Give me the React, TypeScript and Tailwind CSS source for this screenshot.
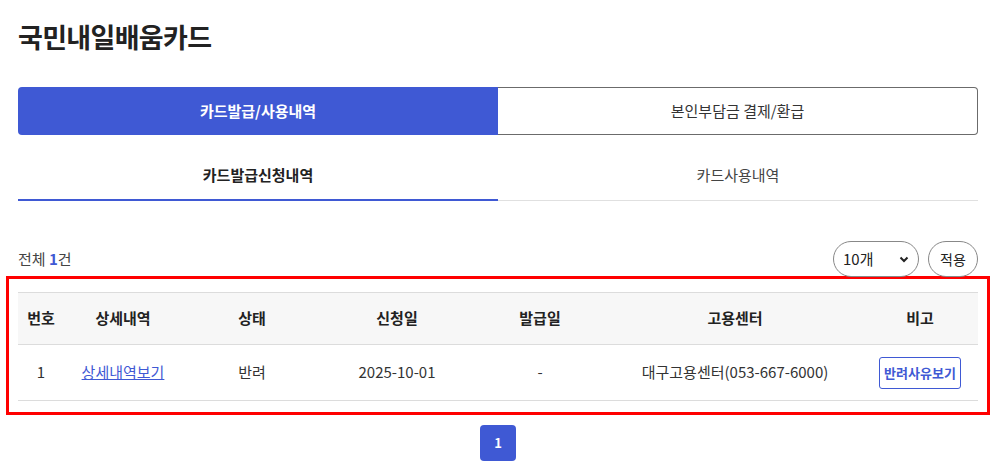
import React from "react";

const font = { fontFamily: '"Noto Sans CJK KR", "Noto Sans", sans-serif' };

const cols = [
  { label: "번호", w: "w-[46px]" },
  { label: "상세내역", w: "w-[118px]" },
  { label: "상태", w: "w-[140px]" },
  { label: "신청일", w: "w-[150px]" },
  { label: "발급일", w: "w-[136px]" },
  { label: "고용센터", w: "w-[254px]" },
  { label: "비고", w: "flex-1" },
];

const App = () => {
  return (
    <div style={font} className="w-[991px] h-[471px] bg-white text-[#222] overflow-hidden">
      <div className="pl-[18px] pr-[13px] pt-[18px]">
        <h1 className="text-[27px] font-bold leading-[38px] tracking-tight">국민내일배움카드</h1>

        <div className="mt-[31px] flex h-[48px] text-[15px]">
          <div className="w-[480px] flex items-center justify-center rounded-l-[4px] bg-[#3f59d4] text-white font-bold">
            카드발급/사용내역
          </div>
          <div className="flex-1 flex items-center justify-center rounded-r-[4px] border border-[#6b6b6b] border-l-0 text-[#333]">
            본인부담금 결제/환급
          </div>
        </div>

        <div className="mt-[16px] flex h-[50px] border-b border-[#e0e0e0] text-[15px]">
          <div className="w-[480px] flex items-center justify-center border-b-2 border-[#3f59d4] -mb-px font-bold">
            카드발급신청내역
          </div>
          <div className="flex-1 flex items-center justify-center text-[#444]">카드사용내역</div>
        </div>

        <div className="mt-[40px] flex items-center justify-between h-[36px]">
          <span className="text-[15px] text-[#444]">
            전체 <span className="text-[#3f59d4] font-bold">1</span>건
          </span>
          <div className="flex items-center gap-[9px]">
            <div className="w-[86px] h-[36px] rounded-full border border-[#888] flex items-center justify-between pl-[9px] pr-[8px] text-[15px]">
              <span>10개</span>
              <svg width="12" height="12" viewBox="0 0 12 12" fill="none" stroke="#222" strokeWidth="2">
                <path d="M2.5 4.5 L6 8 L9.5 4.5" />
              </svg>
            </div>
            <div className="w-[50px] h-[36px] rounded-full border border-[#888] flex items-center justify-center text-[14px]">
              적용
            </div>
          </div>
        </div>

        <div className="-mx-[12px] -mt-px border-[3px] border-[#ff0000] px-[9px] pt-[13px] pb-[11px]">
          <div className="border-t border-[#dcdcdc] text-[15px]">
            <div className="flex h-[52px] items-center bg-[#f7f7f7] border-b border-[#dcdcdc] font-bold">
              {cols.map((c) => (
                <div key={c.label} className={`${c.w} text-center`}>
                  {c.label}
                </div>
              ))}
            </div>
            <div className="flex h-[56px] items-center border-b border-[#dcdcdc] text-[#333]">
              <div className="w-[46px] text-center">1</div>
              <div className="w-[118px] text-center">
                <span className="text-[#3f59d4] underline">상세내역보기</span>
              </div>
              <div className="w-[140px] text-center">반려</div>
              <div className="w-[150px] text-center">2025-10-01</div>
              <div className="w-[136px] text-center">-</div>
              <div className="w-[254px] text-center">대구고용센터(053-667-6000)</div>
              <div className="flex-1 flex justify-center">
                <span className="h-[32px] px-[4px] flex items-center rounded-[3px] border border-[#3f59d4] text-[#3f59d4] text-[13px] font-bold">
                  반려사유보기
                </span>
              </div>
            </div>
          </div>
        </div>

        <div className="mt-[10px] flex justify-center">
          <div className="w-[36px] h-[36px] rounded-[4px] bg-[#3f59d4] text-white text-[13px] font-bold flex items-center justify-center">
            1
          </div>
        </div>
      </div>
    </div>
  );
};

export default App;
